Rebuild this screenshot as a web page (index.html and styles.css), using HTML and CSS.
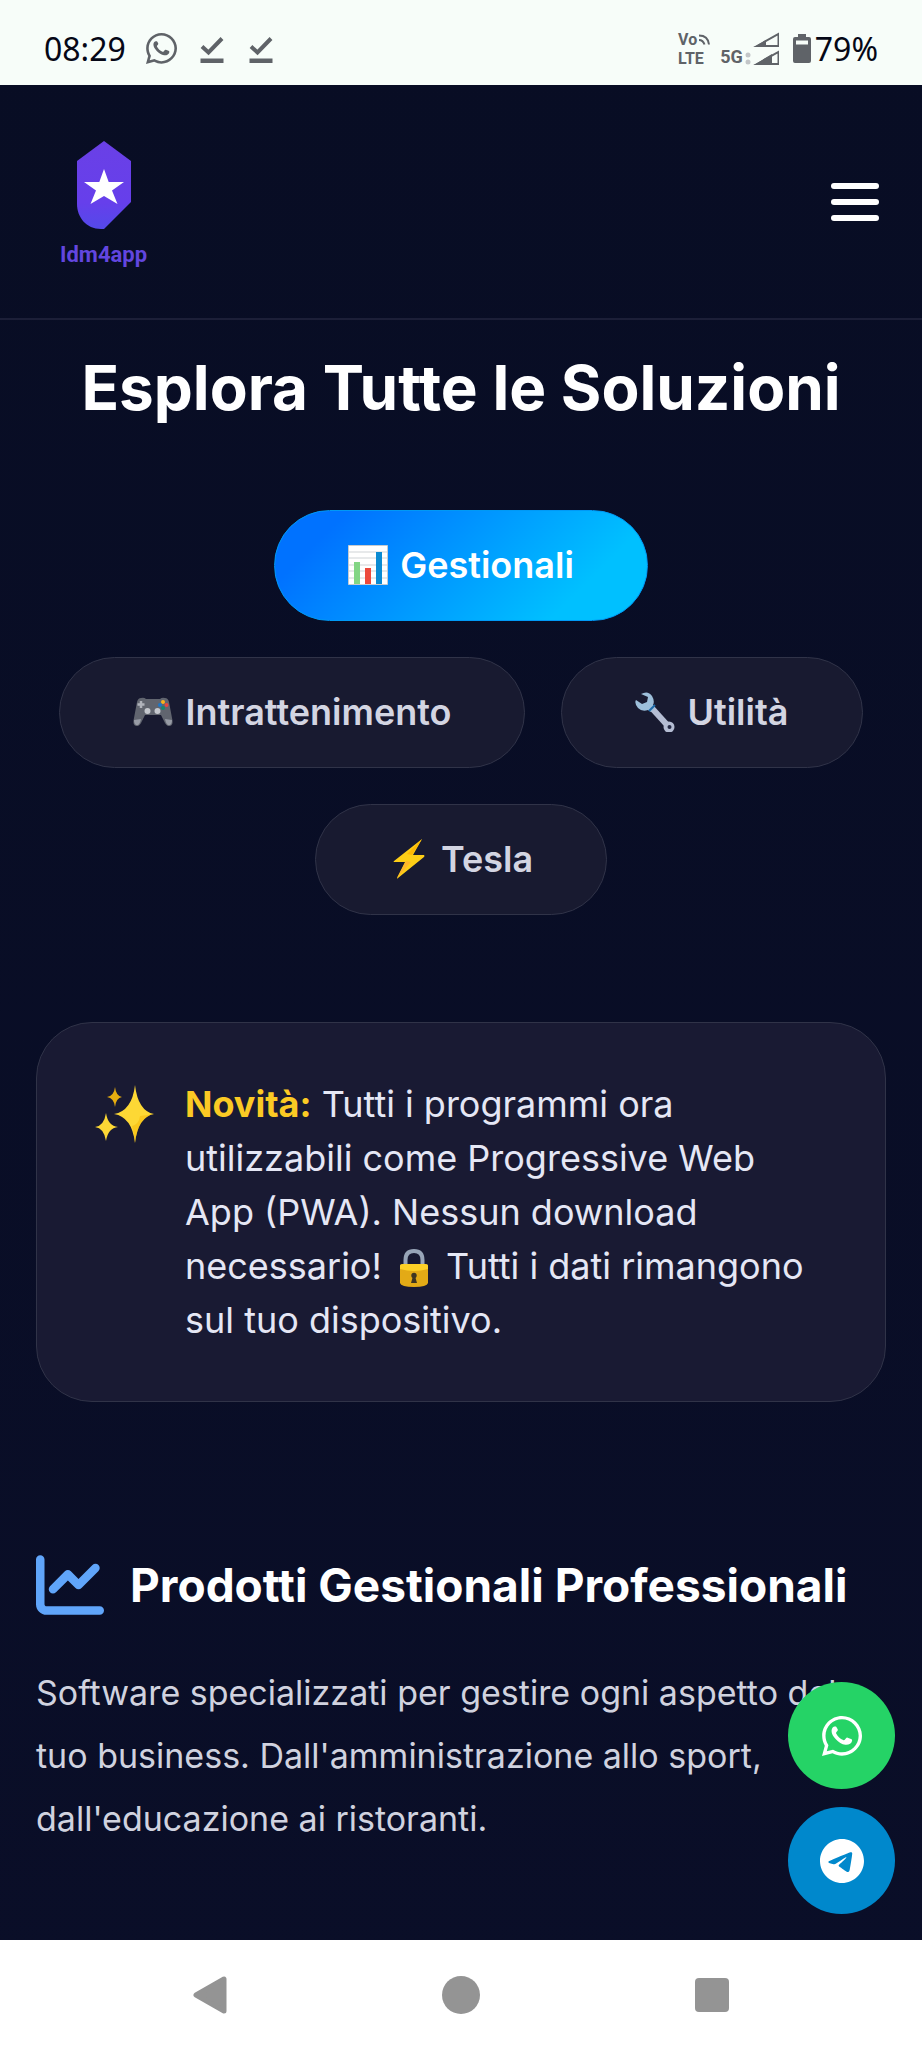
FILE: index.html
```html
<!DOCTYPE html>
<html lang="it">
<head>
<meta charset="utf-8">
<meta name="viewport" content="width=device-width, initial-scale=1">
<title>Idm4app</title>
<link rel="stylesheet" href="styles.css">
</head>
<body>
<svg class="defs" aria-hidden="true">
  <symbol id="whatsapp" viewBox="0 32 448 448"><path d="M380.9 97.1C339 55.1 283.2 32 223.9 32c-122.4 0-222 99.6-222 222 0 39.1 10.2 77.3 29.6 111L0 480l117.7-30.9c32.4 17.7 68.9 27 106.1 27h.1c122.3 0 224.1-99.6 224.1-222 0-59.3-25.2-115-67.1-157zm-157 341.6c-33.2 0-65.7-8.9-94-25.7l-6.7-4-69.8 18.3L72 359.2l-4.4-7c-18.5-29.4-28.2-63.3-28.2-98.2 0-101.7 82.8-184.5 184.6-184.5 49.3 0 95.6 19.2 130.4 54.1 34.8 34.9 56.2 81.2 56.1 130.5 0 101.8-84.9 184.6-186.6 184.6z"/><path d="M142 150c-14 0-34 18-35 46-1 34 20 66 48 96 30 32 68 57 106 62 36 4 72-12 76-44 2-14-4-16-12-20l-38-15c-9-3-13 0-18 6l-14 18c-5 6-10 7-18 3-34-17-60-39-77-72-4-8-3-12 2-18l12-15c4-5 4-10 2-16l-15-27c-4-5-9-4-19-4z"/></symbol>
  <symbol id="download-done" viewBox="0 0 24 28"><path d="M2 11.500 8.500 17.500 22 3.500" fill="none" stroke="currentColor" stroke-width="4"/><path d="M.5 23.500h23v4.500H.5z"/></symbol>
</svg>

<div class="status">
  <div class="status-group">
    <span class="clock">08:29</span>
    <svg class="st-wa" aria-hidden="true"><use href="#whatsapp"/></svg>
    <svg class="st-check" aria-hidden="true"><use href="#download-done"/></svg>
    <svg class="st-check" aria-hidden="true"><use href="#download-done"/></svg>
  </div>
  <div class="status-group status-right">
    <div class="volte">
      <span class="vo">Vo<svg viewBox="0 0 12 11" aria-hidden="true"><path d="M1 1.500q9 0 10 9M1 6q4 0 5.500 4.500" fill="none" stroke="currentColor" stroke-width="2"/></svg></span>
      <span>LTE</span>
    </div>
    <div class="net">
      <span>5G</span>
      <svg viewBox="0 0 34 34" aria-hidden="true">
        <circle cx="3" cy="23" r="2.500" fill="#c3c6c8"/><circle cx="3" cy="30" r="2.500" fill="#c3c6c8"/>
        <path d="M12 14 33.500 2v12z" fill="none" stroke="currentColor" stroke-width="2"/><path d="M9 15 21 8v7z"/>
        <path d="M12 32 33.500 20v12z" fill="none" stroke="currentColor" stroke-width="2"/><path d="M9 33 27 22v11z"/>
      </svg>
    </div>
    <div class="battery">
      <svg viewBox="0 0 18 29" aria-hidden="true"><path d="M5 0h8v3h3q2 0 2 2v22q0 2-2 2H2q-2 0-2-2V5q0-2 2-2h3z"/><path d="M3 6.500h12v4H3z" fill="#f7fdf9"/></svg>
      <span class="clock">79%</span>
    </div>
  </div>
</div>

<header class="header">
  <a class="logo" href="#">
    <svg viewBox="0 0 56 88" aria-hidden="true">
      <defs><linearGradient id="lg" x1="0" y1="0" x2="0" y2="1"><stop offset="0" stop-color="#6a40e6"/><stop offset=".7" stop-color="#663feb"/><stop offset="1" stop-color="#5449ea"/></linearGradient></defs>
      <path d="M28 0 55 20V61L28 88H25C10 88 1 76 1 63V20z" fill="url(#lg)"/>
      <path d="M28 28 32.700 41H48L36 49.500 41.500 63 28 55 14.500 63 20 49.500 8 41H23.300z" fill="#fff"/>
    </svg>
    <span>Idm4app</span>
  </a>
  <button class="menu" type="button" aria-label="Menu"><i></i><i></i><i></i></button>
</header>

<main class="main">
  <h1>Esplora Tutte le Soluzioni</h1>

  <div class="tabs">
    <button class="tab active" type="button">
      <svg viewBox="0 0 40 40" aria-hidden="true"><path d="M.5.500h39v39H.5z" fill="#fff" stroke="#c6cbd0"/><path d="M1 7h38M1 13h38M1 20h38M1 26h38M1 33h38" stroke="#cfd3d6"/><path d="M6 17h6v22H6z" fill="#82d584"/><path d="M17 23h6v16h-6z" fill="#ec493c"/><path d="M28 7h6v32h-6z" fill="#0a8ad2"/></svg>
      Gestionali
    </button>
    <button class="tab" type="button">
      <svg viewBox="0 0 40 40" aria-hidden="true"><path d="M8 6q3-1 5 1h14q2-2 5-1 3 0 4 4l3 16q2 8-3 8-3 0-5-5l-3-6H12l-3 6q-2 5-5 5-5 0-3-8L4 10q1-4 4-4z" fill="#61656f"/><path d="M1 28q0 6 4 5 2-1 3-6M39 28q0 6-4 5-2-1-3-6" fill="#979ba5"/><path d="M8 9v7M4.500 12.500h7" stroke="#b0b3bb" stroke-width="2.500"/><circle cx="14.500" cy="19" r="3" fill="#c5c8ce"/><circle cx="24.500" cy="19" r="3" fill="#c5c8ce"/><circle cx="30" cy="10" r="2" fill="#f9b219"/><circle cx="27" cy="13" r="2" fill="#1d76c8"/><circle cx="33.500" cy="13" r="2" fill="#e5473f"/><circle cx="30" cy="16" r="2" fill="#15866f"/></svg>
      Intrattenimento
    </button>
    <button class="tab" type="button">
      <svg viewBox="0 0 40 40" aria-hidden="true"><path d="M14 13 33.500 34.500" stroke="#b5bdd3" stroke-width="6"/><circle cx="34" cy="35" r="5.500" fill="#b5bdd3"/><circle cx="34.500" cy="35" r="2" fill="#252a45"/><path d="M6 2Q13-2 17 4q3 5 1 9l2 3-4 4-3-2q-6 2-10-2-4-5-2-8l6 4 5-2 1-5z" fill="#9dbfda"/><path d="m14 19 6-6" stroke="#1c69a8" stroke-width="2"/></svg>
      Utilità
    </button>
    <button class="tab" type="button">
      <svg viewBox="0 0 40 40" aria-hidden="true"><path d="M33 0 5 22q-1 1 0 1l11 0L8 39q0 1 1 0l26-21q1-1 0-2H24z" fill="#fdce16"/><path d="m33 0-15 15 5 1z" fill="#feb804"/><path d="m8 39 14-16-5-1z" fill="#ffb62b"/></svg>
      Tesla
    </button>
  </div>

  <section class="notice">
    <svg class="sparkles" viewBox="0 0 60 58" aria-hidden="true">
      <path d="M40 0Q43 26 59 29 43 32 40 58 37 32 19 29 37 26 40 0z" fill="#fdd835"/><path d="M59 29Q43 32 40 58 39 48 37 41q7-2 8-10z" fill="#f4b400" opacity=".45"/>
      <path d="M11 28q2 13 12 14-10 1-12 14Q9 43 0 42q9-1 11-14z" fill="#fdd835"/><path d="M20 2q1 9 7 10-6 1-7 10-1-9-8-10 7-1 8-10z" fill="#e6ad10"/>
    </svg>
    <p><strong>Novità:</strong> Tutti i programmi ora utilizzabili come Progressive Web App (PWA). Nessun download necessario! <svg class="lock" viewBox="0 0 28 38" role="img" aria-label="lucchetto"><path d="M5.500 20V11q0-9 8.500-9t8.500 9v9" fill="none" stroke="#98a5b8" stroke-width="4"/><path d="M0 17q0-2 3-2h22q3 0 3 2v17q-1 4-14 4T0 34z" fill="#e3aa16"/><path d="M0 17q0-2 3-2h22q3 0 3 2v3q-14 4-28 0z" fill="#fdd026"/><circle cx="14" cy="26.500" r="2.700" fill="#3e3522"/><path d="m13 27-2 7h6l-2-7z" fill="#3e3522"/></svg> Tutti i dati rimangono sul tuo dispositivo.</p>
  </section>

  <section class="products">
    <h2>
      <svg viewBox="0 32 512 448" aria-hidden="true"><path d="M64 64c0-17.700-14.300-32-32-32S0 46.300 0 64V400c0 44.200 35.800 80 80 80H480c17.700 0 32-14.300 32-32s-14.300-32-32-32H80c-8.800 0-16-7.200-16-16V64zm406.600 86.600c12.500-12.500 12.500-32.800 0-45.300s-32.800-12.500-45.300 0L320 210.700l-57.400-57.400c-12.500-12.500-32.800-12.500-45.300 0l-112 112c-12.500 12.500-12.500 32.800 0 45.300s32.800 12.500 45.300 0L240 221.300l57.400 57.400c12.500 12.500 32.800 12.500 45.300 0l128-128z"/></svg>
      Prodotti Gestionali Professionali
    </h2>
    <p>Software specializzati per gestire ogni aspetto del tuo business. Dall'amministrazione allo sport, dall'educazione ai ristoranti.</p>
  </section>
</main>

<div class="fabs">
  <a class="fab fab-wa" href="#" aria-label="WhatsApp"><svg viewBox="0 0 40 40" aria-hidden="true"><use href="#whatsapp"/></svg></a>
  <a class="fab fab-tg" href="#" aria-label="Telegram"><svg viewBox="0 8 496 496" aria-hidden="true"><path d="M248,8C111.033,8,0,119.033,0,256S111.033,504,248,504,496,392.967,496,256,384.967,8,248,8ZM362.952,176.660c-3.732,39.215-19.881,134.378-28.100,178.300-3.476,18.584-10.322,24.816-16.948,25.425-14.400,1.326-25.338-9.517-39.287-18.661-21.827-14.308-34.158-23.215-55.346-37.177-24.485-16.135-8.612-25,5.342-39.500,3.652-3.793,67.107-61.510,68.335-66.746.153-.655.300-3.100-1.154-4.384s-3.590-.849-5.135-.500q-3.283.746-104.608,69.142-14.845,10.194-26.894,9.934c-8.855-.191-25.888-5.006-38.551-9.123-15.531-5.048-27.875-7.717-26.800-16.291q.840-6.700,18.450-13.700,108.446-47.248,144.628-62.300c68.872-28.647,83.183-33.623,92.511-33.789,2.052-.034,6.639.474,9.610,2.885a10.452,10.452,0,0,1,3.530,6.716A43.765,43.765,0,0,1,362.952,176.660Z"/></svg></a>
</div>

<nav class="sysnav" aria-label="Sistema">
  <button type="button" aria-label="Indietro"><svg viewBox="0 0 38 38"><path d="M33 3v32L5 19z" stroke="currentColor" stroke-width="5" stroke-linejoin="round"/></svg></button>
  <button type="button" aria-label="Home"><svg viewBox="0 0 38 38"><circle cx="19" cy="19" r="19"/></svg></button>
  <button type="button" aria-label="Recenti"><svg viewBox="0 0 38 38"><rect x="2" y="2" width="34" height="34" rx="4"/></svg></button>
</nav>
</body>
</html>
```
FILE: styles.css
```css
* { box-sizing: border-box; }

body {
  margin: 0;
  min-height: 100vh;
  display: flex;
  flex-direction: column;
  background: linear-gradient(#080d24, #0a0e28);
  color: #fff;
  font-family: Inter, "Noto Sans", sans-serif;
  font-optical-sizing: none;
}

svg { fill: currentColor; flex: none; }
button { font: inherit; border: 0; padding: 0; background: none; color: inherit; }
h1, h2, p { margin: 0; }
.defs { position: absolute; width: 0; height: 0; }

/* Phone status bar */
.status {
  height: 85px;
  padding: 12px 44px 0;
  display: flex;
  align-items: center;
  justify-content: space-between;
  background: #f7fdf9;
  color: #5f6368;
}
.status-group { display: flex; align-items: center; gap: 20px; }
.clock { font: 32px/40px "Noto Sans", sans-serif; color: #050716; }
.st-wa { width: 31px; height: 31px; }
.st-check { width: 24px; height: 28px; margin-left: 3px; margin-right: 2px; }
.status-right { gap: 10px; }
.volte { display: flex; flex-direction: column; font: 700 16px/19px Roboto, sans-serif; }
.vo { display: flex; align-items: center; gap: 1px; }
.vo svg { width: 12px; height: 11px; }
.net { display: flex; align-items: flex-end; gap: 2px; font: 700 18px/18px Roboto, sans-serif; }
.net svg { width: 34px; height: 34px; }
.battery { display: flex; align-items: center; gap: 4px; margin-left: 4px; }
.battery svg { width: 18px; height: 29px; }

/* Site header */
.header {
  padding: 56px 43px 50px 60px;
  display: flex;
  justify-content: space-between;
  align-items: flex-start;
  border-bottom: 2px solid #1c1f38;
}
.logo {
  display: flex;
  flex-direction: column;
  align-items: center;
  gap: 13px;
  color: #6246df;
  font: 700 22px/26px Roboto, sans-serif;
  text-decoration: none;
}
.logo svg { width: 56px; height: 88px; }
.menu { width: 48px; margin-top: 42px; display: flex; flex-direction: column; gap: 10px; }
.menu i { height: 6px; border-radius: 3px; background: #fff; }

/* Page content */
.main { flex: 1; padding: 28px 36px 0; }
h1 { font-size: 62px; line-height: 80px; font-weight: 700; text-align: center; }

.tabs {
  margin-top: 82px;
  display: flex;
  flex-wrap: wrap;
  justify-content: center;
  gap: 36px;
}
.tab {
  height: 111px;
  padding: 0 73px 2px;
  display: flex;
  align-items: center;
  gap: 12px;
  border: 1px solid #303348;
  border-radius: 56px;
  background: #181a30;
  color: #d3d5e2;
  font-size: 36px;
  font-weight: 600;
}
.tab svg { width: 40px; height: 40px; }
.tab.active {
  border-color: #0099f5;
  background: linear-gradient(135deg, #0072ff 15%, #00c0ff 80%);
  color: #fff;
}

.notice {
  margin-top: 107px;
  padding: 54px 58px;
  display: flex;
  gap: 30px;
  border: 1px solid #303348;
  border-radius: 56px;
  background: #191a33;
  color: #e5e7f5;
  font-size: 36px;
  line-height: 54px;
}
.notice strong { color: #fbca24; }
.sparkles { width: 60px; height: 58px; margin-top: 8px; }
.lock { width: 28px; height: 38px; margin: 0 8px; vertical-align: -8px; }

.products { margin-top: 147px; }
h2 {
  display: flex;
  align-items: center;
  gap: 26px;
  font-size: 46px;
  line-height: 72px;
  font-weight: 700;
}
h2 svg { width: 68px; height: 60px; color: #60a5fa; }
.products p {
  margin-top: 40px;
  color: #d0d2df;
  font-size: 34px;
  line-height: 63px;
}

/* Floating contact buttons */
.fabs {
  position: fixed;
  right: 27px;
  bottom: 134px;
  display: flex;
  flex-direction: column;
  gap: 18px;
}
.fab {
  width: 107px;
  height: 107px;
  display: grid;
  place-items: center;
  border-radius: 50%;
  color: #fff;
}
.fab-wa { background: #25d366; }
.fab-tg { background: #0088cc; }
.fab-wa svg { width: 40px; height: 40px; }
.fab-tg svg { width: 44px; height: 44px; }

/* System navigation */
.sysnav {
  height: 108px;
  padding: 2px 84px 0;
  display: grid;
  grid-template-columns: repeat(3, 1fr);
  place-items: center;
  background: #fff;
  color: #949494;
}
.sysnav svg { width: 38px; height: 38px; display: block; }
```
